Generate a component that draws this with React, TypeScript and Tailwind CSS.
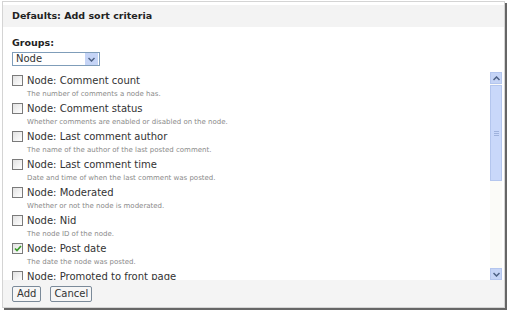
import React from "react";

const ITEMS: { label: string; desc?: string; checked?: boolean }[] = [
  { label: "Node: Comment count", desc: "The number of comments a node has." },
  { label: "Node: Comment status", desc: "Whether comments are enabled or disabled on the node." },
  { label: "Node: Last comment author", desc: "The name of the author of the last posted comment." },
  { label: "Node: Last comment time", desc: "Date and time of when the last comment was posted." },
  { label: "Node: Moderated", desc: "Whether or not the node is moderated." },
  { label: "Node: Nid", desc: "The node ID of the node." },
  { label: "Node: Post date", desc: "The date the node was posted.", checked: true },
  { label: "Node: Promoted to front page" },
];

function Checkbox({ checked }: { checked?: boolean }) {
  return (
    <span className="w-[11px] h-[11px] shrink-0 border border-[#7a7a7a] bg-gradient-to-br from-[#e2e2e2] to-white flex items-center justify-center">
      {checked && (
        <svg width="8" height="7" viewBox="0 0 8 7">
          <path d="M1 3.5 L3 5.5 L7 1" fill="none" stroke="#3a9a2a" strokeWidth="1.7" />
        </svg>
      )}
    </span>
  );
}

export default function App() {
  return (
    <div className="w-[509px] h-[315px] bg-white overflow-hidden font-['DejaVu_Sans',Verdana,sans-serif] text-[#222]">
      <div className="ml-[2px] mt-[1px] w-[503px] h-[307px] border border-[#d4d4d4] bg-white shadow-[2px_2px_0_#666] flex flex-col pt-[3px]">
        {/* header */}
        <div className="h-[22px] bg-[#f3f3f3] px-[9px] flex items-center text-[9.5px] font-bold">
          Defaults: Add sort criteria
        </div>

        <div className="px-[9px] pt-[9px]">
          <div className="text-[9.5px] font-bold leading-[14px]">Groups:</div>
          <div className="mt-[2px] w-[88px] h-[14px] border border-[#7f9db9] flex items-center">
            <span className="flex-1 pl-[3px] text-[10px] leading-[12px] text-[#333]">Node</span>
            <span className="w-[13px] h-[12px] mr-[1px] bg-[#c5d4f6] flex items-center justify-center">
              <svg width="7" height="5" viewBox="0 0 7 5">
                <path d="M0.5 1 L3.5 4 L6.5 1" fill="none" stroke="#4d6185" strokeWidth="1.5" />
              </svg>
            </span>
          </div>
        </div>

        {/* list + scrollbar */}
        <div className="mt-[6px] h-[208px] flex">
          <div className="flex-1 overflow-hidden pl-[9px] pt-[1px]">
            {ITEMS.map((it) => (
              <div key={it.label} className="h-[28px]">
                <div className="flex items-center gap-[4px] h-[15px]">
                  <Checkbox checked={it.checked} />
                  <span className="text-[10px] text-[#333]">{it.label}</span>
                </div>
                {it.desc && (
                  <div className="pl-[15px] text-[7px] leading-[13px] text-[#8a8a8a]">{it.desc}</div>
                )}
              </div>
            ))}
          </div>
          <div className="w-[12px] mr-[2px] flex flex-col bg-[#fbfbf8]">
            <div className="h-[12px] bg-[#c5d4f6] border border-[#b4c6ee] flex items-center justify-center">
              <svg width="7" height="5" viewBox="0 0 7 5">
                <path d="M0.5 4 L3.5 1 L6.5 4" fill="none" stroke="#4d6185" strokeWidth="1.5" />
              </svg>
            </div>
            <div className="mt-[1px] h-[96px] bg-[#c9d8fa] border border-[#b4c6ee] flex items-center justify-center">
              <div className="flex flex-col gap-[1px]">
                <span className="w-[5px] h-px bg-[#9fb2dc]" />
                <span className="w-[5px] h-px bg-[#9fb2dc]" />
                <span className="w-[5px] h-px bg-[#9fb2dc]" />
              </div>
            </div>
            <div className="flex-1" />
            <div className="h-[12px] bg-[#c5d4f6] border border-[#b4c6ee] flex items-center justify-center">
              <svg width="7" height="5" viewBox="0 0 7 5">
                <path d="M0.5 1 L3.5 4 L6.5 1" fill="none" stroke="#4d6185" strokeWidth="1.5" />
              </svg>
            </div>
          </div>
        </div>

        {/* buttons */}
        <div className="flex-1 bg-[#f4f4f4] px-[9px] flex items-center gap-[9px]">
          <button className="h-[16px] px-[4px] border border-[#7b8a99] rounded-[2px] bg-[#f6f6f6] text-[10px] leading-[14px] text-[#333]">
            Add
          </button>
          <button className="h-[16px] px-[3px] border border-[#7b8a99] rounded-[2px] bg-[#f6f6f6] text-[10px] leading-[14px] text-[#333]">
            Cancel
          </button>
        </div>
      </div>
    </div>
  );
}
